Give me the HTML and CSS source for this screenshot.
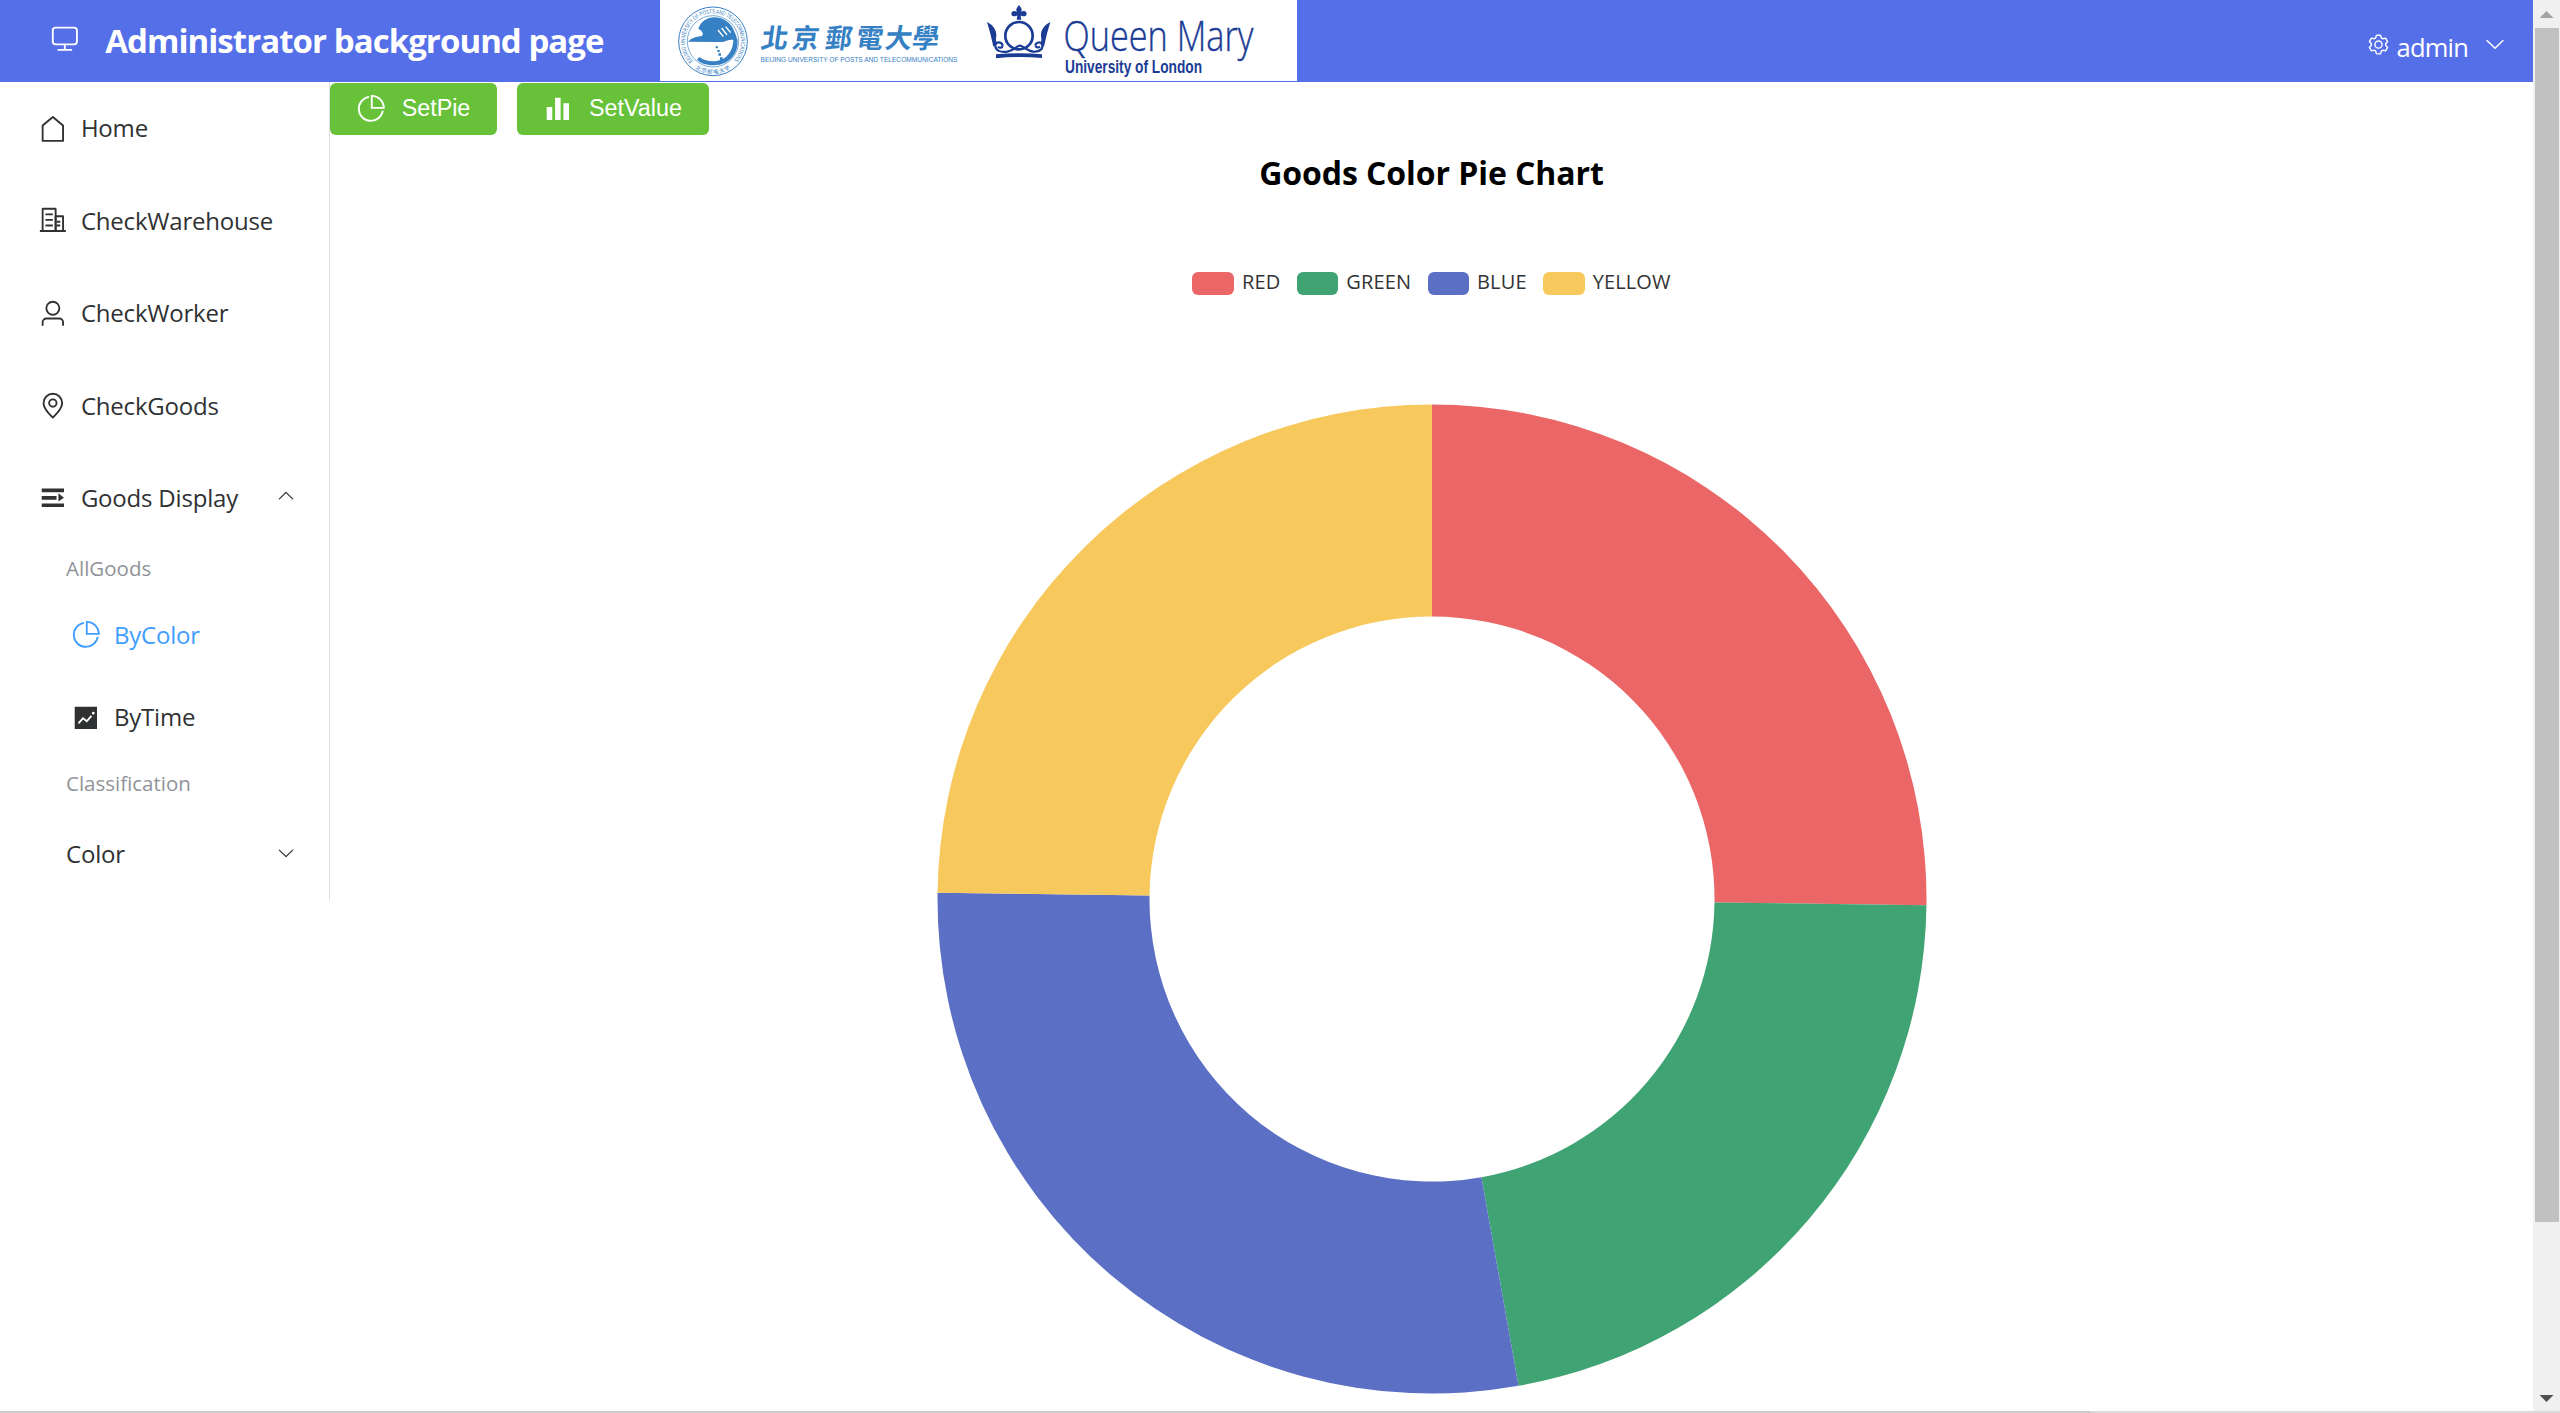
FILE: index.html
```html
<!DOCTYPE html>
<html lang="en">
<head>
<meta charset="utf-8">
<title>Administrator background page</title>
<link rel="stylesheet" href="styles.css">
</head>
<body>
<svg class="sprite" aria-hidden="true">
  <symbol id="i-monitor" viewBox="0 0 1024 1024"><path d="M544 768v128h192a32 32 0 1 1 0 64H288a32 32 0 1 1 0-64h192V768H192A128 128 0 0 1 64 640V256a128 128 0 0 1 128-128h640a128 128 0 0 1 128 128v384a128 128 0 0 1-128 128H544zM192 192a64 64 0 0 0-64 64v384a64 64 0 0 0 64 64h640a64 64 0 0 0 64-64V256a64 64 0 0 0-64-64H192z"/></symbol>
  <symbol id="i-house" viewBox="0 0 1024 1024"><path d="M192 413.952V896h640V413.952L512 147.328 192 413.952zM139.52 374.4l352-293.312a32 32 0 0 1 40.96 0l352 293.312A32 32 0 0 1 896 398.976V928a32 32 0 0 1-32 32H160a32 32 0 0 1-32-32V399.04a32 32 0 0 1 11.52-24.64z"/></symbol>
  <symbol id="i-office" viewBox="0 0 1024 1024"><path d="M192 128v704h384V128H192zm-32-64h448a32 32 0 0 1 32 32v768a32 32 0 0 1-32 32H160a32 32 0 0 1-32-32V96a32 32 0 0 1 32-32z"/><path d="M256 256h256v64H256v-64zm0 192h256v64H256v-64zm0 192h256v64H256v-64zm384-128h128v64H640v-64zm0 128h128v64H640v-64zM64 832h896v64H64v-64z"/><path d="M640 384v448h192V384H640zm-32-64h256a32 32 0 0 1 32 32v512a32 32 0 0 1-32 32H608a32 32 0 0 1-32-32V352a32 32 0 0 1 32-32z"/></symbol>
  <symbol id="i-user" viewBox="0 0 1024 1024"><path d="M512 512a192 192 0 1 0 0-384 192 192 0 0 0 0 384zm0 64a256 256 0 1 1 0-512 256 256 0 0 1 0 512zm320 320v-96a96 96 0 0 0-96-96H288a96 96 0 0 0-96 96v96a32 32 0 1 1-64 0v-96a160 160 0 0 1 160-160h448a160 160 0 0 1 160 160v96a32 32 0 1 1-64 0z"/></symbol>
  <symbol id="i-location" viewBox="0 0 1024 1024"><path d="M800 416a288 288 0 1 0-576 0c0 118.144 94.528 272.128 288 456.576C705.472 688.128 800 534.144 800 416zM512 960C277.312 746.688 160 565.312 160 416a352 352 0 0 1 704 0c0 149.312-117.312 330.688-352 544z"/><path d="M512 512a96 96 0 1 0 0-192 96 96 0 0 0 0 192zm0 64a160 160 0 1 1 0-320 160 160 0 0 1 0 320z"/></symbol>
  <symbol id="i-expand" viewBox="0 0 1024 1024"><path d="M128 192h768v128H128V192zm0 256h512v128H128V448zm0 256h768v128H128V704zm576-352 192 160-192 128V352z"/></symbol>
  <symbol id="i-pie" viewBox="0 0 1024 1024"><path d="M448 68.48v64.832A384.128 384.128 0 0 0 512 896a384.128 384.128 0 0 0 378.688-320h64.768A448.128 448.128 0 0 1 64 512 448.128 448.128 0 0 1 448 68.48z"/><path d="M576 97.28V448h350.72A384.064 384.064 0 0 0 576 97.28zM512 64V33.152A448 448 0 0 1 990.848 512H512V64z"/></symbol>
  <symbol id="i-trend" viewBox="0 0 1024 1024"><path d="M128 896V128h768v768H128zm291.712-327.296 128 102.4 180.16-201.792-47.744-42.624-139.84 156.608-128-102.4-180.16 201.792 47.744 42.624 139.84-156.608zM816 352a48 48 0 1 0-96 0 48 48 0 0 0 96 0z"/></symbol>
  <symbol id="i-histogram" viewBox="0 0 1024 1024"><path d="M416 896V128h192v768H416zm-288 0V448h192v448H128zm576 0V320h192v576H704z"/></symbol>
  <symbol id="i-arrow" viewBox="0 0 1024 1024"><path d="M831.872 340.864 512 652.672 192.128 340.864a30.592 30.592 0 0 0-42.752 0 29.12 29.12 0 0 0 0 41.6L489.664 714.24a32 32 0 0 0 44.672 0l340.288-331.712a29.12 29.12 0 0 0 0-41.728 30.592 30.592 0 0 0-42.752 0z"/></symbol>
  <symbol id="i-setting" viewBox="0 0 1024 1024"><path d="M600.704 64a32 32 0 0 1 30.464 22.208l35.2 109.376c14.784 7.232 28.928 15.36 42.432 24.512l112.384-24.192a32 32 0 0 1 34.432 15.36L944.32 364.8a32 32 0 0 1-4.032 37.504l-77.12 85.12a357.12 357.12 0 0 1 0 49.024l77.12 85.248a32 32 0 0 1 4.032 37.504l-88.704 153.6a32 32 0 0 1-34.432 15.296L708.8 803.904c-13.44 9.088-27.648 17.28-42.368 24.512l-35.264 109.376A32 32 0 0 1 600.704 960H423.296a32 32 0 0 1-30.464-22.208L357.696 828.48a351.616 351.616 0 0 1-42.56-24.64l-112.32 24.256a32 32 0 0 1-34.432-15.36L79.68 659.2a32 32 0 0 1 4.032-37.504l77.12-85.248a357.12 357.12 0 0 1 0-48.896l-77.12-85.248A32 32 0 0 1 79.68 364.8l88.704-153.6a32 32 0 0 1 34.432-15.296l112.32 24.256c13.568-9.152 27.776-17.408 42.56-24.64l35.2-109.312A32 32 0 0 1 423.232 64H600.64zm-23.424 64H446.72l-36.352 113.088-24.512 11.968a294.113 294.113 0 0 0-34.816 20.096l-22.656 15.36-116.224-25.088-65.28 113.152 79.68 88.192-1.92 27.136a293.12 293.12 0 0 0 0 40.192l1.92 27.136-79.808 88.192 65.344 113.152 116.224-25.024 22.656 15.296a294.113 294.113 0 0 0 34.816 20.096l24.512 11.968L446.72 896h130.688l36.48-113.152 24.448-11.904a288.282 288.282 0 0 0 34.752-20.096l22.592-15.296 116.288 25.024 65.28-113.152-79.744-88.192 1.92-27.136a293.12 293.12 0 0 0 0-40.256l-1.92-27.136 79.808-88.128-65.344-113.152-116.288 24.96-22.592-15.232a287.616 287.616 0 0 0-34.752-20.096l-24.448-11.904L577.344 128zM512 320a192 192 0 1 1 0 384 192 192 0 0 1 0-384zm0 64a128 128 0 1 0 0 256 128 128 0 0 0 0-256z"/></symbol>
</svg>

<div class="page">
  <header class="header">
    <svg class="icon header-icon"><use href="#i-monitor"/></svg>
    <h1 class="header-title">Administrator background page</h1>
    <svg class="logo" viewBox="660 0 637 81" role="img" aria-label="University logos">
      <g class="bupt" transform="translate(650 0) scale(.33333)">
        <circle cx="189" cy="124" r="103" class="line" stroke-width="3"/>
        <circle cx="189" cy="124" r="77" class="line" stroke-width="2"/>
        <path id="ring-top" d="M129 183A84 84 0 1 1 249 183" fill="none"/>
        <path id="ring-bottom" d="M133 204A98 98 0 0 0 245 204" fill="none"/>
        <text class="ring"><textPath href="#ring-top" textLength="390" lengthAdjust="spacingAndGlyphs">BEIJING UNIVERSITY OF POSTS AND TELECOMMUNICATIONS</textPath></text>
        <text class="ring-cn"><textPath href="#ring-bottom" textLength="112" startOffset="3">北京邮电大学</textPath></text>
        <path d="M114 125C124 114 138 110 156 108C162 100 156 92 145 86C152 64 172 52 192 52C222 52 244 70 252 92C258 104 262 116 262 124C250 118 240 118 230 122C222 126 214 126 200 126Z"/>
        <path d="M204 90L220 110M215 84L231 105M227 80L242 98" stroke="#fff" stroke-width="4" fill="none"/>
        <path d="M262 118C268 158 238 196 192 196C172 196 152 190 141 179L148 171C160 180 174 184 190 184C226 184 250 156 250 118Z"/>
        <path d="M197 139h7v6h-7zM202 150h7v6h-7zM205 160h8v7h-8zM210 172h8v12h-8z"/>
      </g>
      <g class="bupt">
        <text class="brush" transform="translate(0 48) skewX(-8)" y="0" x="760 791 824 855 884 911">北京郵電大學</text>
        <text class="bupt-en" x="760.5" y="62" textLength="197" lengthAdjust="spacingAndGlyphs">BEIJING UNIVERSITY OF POSTS AND TELECOMMUNICATIONS</text>
      </g>
      <g class="qm" transform="translate(970 0) scale(.33333)">
        <path d="M147 15C154 24 158 30 153 36C159 31 170 32 170 41C170 49 160 50 155 47L152 47L154 59H140L142 47L139 47C134 50 124 49 124 41C124 32 135 31 141 36C136 30 140 24 147 15Z"/>
        <ellipse cx="147" cy="107" rx="41" ry="41" class="line" stroke-width="8"/>
        <path d="M51 66C70 76 80 90 79 108C78 116 76 122 82 130L70 140C64 112 58 88 51 66ZM241 66C222 76 212 90 213 108C214 116 216 122 210 130L222 140C228 112 234 88 241 66Z"/>
        <path class="line" stroke-width="6.5" d="M98 136C94 124 78 124 76 136C75 152 92 158 112 155C140 150 140 134 152 137C166 142 176 157 196 155C212 153 220 146 216 133C212 124 198 126 196 136M84 140C90 146 97 143 98 136M210 140C204 145 198 142 196 136"/>
        <path d="M78 163C124 159 170 159 216 163V174C170 170 124 170 78 175Z"/>
      </g>
      <g class="qm">
        <text class="qm-name" x="1063.5" y="50.7" textLength="190" lengthAdjust="spacingAndGlyphs">Queen Mary</text>
        <text class="qm-sub" x="1065" y="73" textLength="137" lengthAdjust="spacingAndGlyphs">University of London</text>
      </g>
    </svg>
    <div class="account">
      <svg class="icon gear"><use href="#i-setting"/></svg>
      <span class="account-name">admin</span>
      <svg class="icon account-arrow"><use href="#i-arrow"/></svg>
    </div>
  </header>

  <div class="body">
    <nav class="menu">
      <a class="item"><svg class="icon"><use href="#i-house"/></svg><span>Home</span></a>
      <a class="item"><svg class="icon"><use href="#i-office"/></svg><span>CheckWarehouse</span></a>
      <a class="item"><svg class="icon"><use href="#i-user"/></svg><span>CheckWorker</span></a>
      <a class="item"><svg class="icon"><use href="#i-location"/></svg><span>CheckGoods</span></a>
      <a class="item"><svg class="icon"><use href="#i-expand"/></svg><span>Goods Display</span><svg class="caret open"><use href="#i-arrow"/></svg></a>
      <div class="group">AllGoods</div>
      <a class="item sub active"><svg class="icon"><use href="#i-pie"/></svg><span>ByColor</span></a>
      <a class="item sub"><svg class="icon"><use href="#i-trend"/></svg><span>ByTime</span></a>
      <div class="group">Classification</div>
      <a class="item nested"><span>Color</span><svg class="caret"><use href="#i-arrow"/></svg></a>
    </nav>

    <main class="content">
      <div class="toolbar">
        <button class="btn"><svg class="icon"><use href="#i-pie"/></svg><span>SetPie</span></button>
        <button class="btn"><svg class="icon"><use href="#i-histogram"/></svg><span>SetValue</span></button>
      </div>
      <h2 class="chart-title">Goods Color Pie Chart</h2>
      <ul class="legend">
        <li class="key red">RED</li>
        <li class="key green">GREEN</li>
        <li class="key blue">BLUE</li>
        <li class="key yellow">YELLOW</li>
      </ul>
      <svg class="donut" viewBox="-495 -495 990 990" role="img" aria-label="Goods by color">
        <path class="s-red" d="M0-494.5A494.5 494.5 0 0 1 494.46 6.21L282.48 3.55A282.5 282.5 0 0 0 0-282.5Z"/>
        <path class="s-green" d="M494.46 6.21A494.5 494.5 0 0 1 86.55 486.87L49.44 278.14A282.5 282.5 0 0 0 282.48 3.55Z"/>
        <path class="s-blue" d="M86.55 486.87A494.5 494.5 0 0 1-494.46-6.21L-282.48-3.55A282.5 282.5 0 0 0 49.44 278.14Z"/>
        <path class="s-yellow" d="M-494.46-6.21A494.5 494.5 0 0 1 0-494.5V-282.5A282.5 282.5 0 0 0-282.48-3.55Z"/>
      </svg>
    </main>
  </div>
</div>
<div class="scrollbar"><i class="up"></i><i class="thumb"></i><i class="down"></i></div>
<div class="edge"><i class="edge-fill"></i></div>
</body>
</html>
```
FILE: styles.css
```css
* { box-sizing: border-box; }

body {
  margin: 0;
  width: 2560px;
  height: 1413px;
  overflow: hidden;
  display: grid;
  grid-template: 1411px 2px / 2533px 27px;
  background: #fff;
  color: #303133;
  font-family: "Open Sans", "Noto Sans", sans-serif;
}

.sprite { position: absolute; width: 0; height: 0; }
.icon { width: 29.7px; height: 29.7px; fill: currentColor; flex: none; }

.page { overflow: hidden; }

/* Header */
.header {
  display: flex;
  height: 82px;
  background: #556fe9;
  color: #fff;
}
.header-icon { margin: 23px 0 0 49.5px; }
.header-title {
  margin: 0 0 0 26px;
  width: 554.8px;
  font-size: 33px;
  line-height: 82px;
  letter-spacing: -.95px;
  white-space: nowrap;
}
.logo { width: 637px; height: 81px; background: #fff; flex: none; }
.account {
  display: flex;
  align-items: center;
  margin-left: auto;
  padding: 11px 26px 0 0;
}
.gear { width: 23px; height: 23px; margin: -4px 7px 0 0; }
.account-name { font-size: 25.5px; line-height: 36px; letter-spacing: -.8px; }
.account-arrow { width: 24px; height: 24px; margin: -5px 0 0 15px; }

/* Logos */
.bupt { fill: #3680c4; }
.qm { fill: #1b3c95; }
.line { fill: none; }
.bupt .line { stroke: #3680c4; }
.qm .line { stroke: #1b3c95; }
.ring { font: 400 18px "Liberation Sans", sans-serif; }
.ring-cn { font: 400 17px "Noto Sans CJK SC", sans-serif; }
.brush { font: 700 27px "Noto Sans CJK TC", sans-serif; }
.bupt-en { font: 400 6.8px "Liberation Sans", sans-serif; }
.qm-name { font: 300 42px "Open Sans", sans-serif; stroke: #1b3c95; stroke-width: .4px; }
.qm-sub { font: 700 17.5px "Liberation Sans", sans-serif; }

/* Body */
.body { display: flex; align-items: flex-start; }
.menu {
  width: 330px;
  height: 818px;
  padding-top: .5px;
  border-right: 1px solid #dcdfe6;
  flex: none;
  font-size: 24px;
}
.item {
  display: flex;
  align-items: center;
  height: 92.4px;
  padding: 0 32px 0 38px;
  gap: 13.2px;
  letter-spacing: -.2px;
  white-space: nowrap;
}
.item span { padding-bottom: 1.5px; }
.sub { height: 82.5px; padding-left: 71px; }
.nested { padding-left: 66px; }
.active { color: #409eff; }
.group {
  height: 49.5px;
  padding-left: 66px;
  font-size: 20.5px;
  line-height: 49.5px;
  color: #909399;
}
.caret { width: 20px; height: 20px; margin: -4px 1px 0 auto; fill: currentColor; }
.open { transform: rotate(180deg); }

/* Content */
.content {
  flex: 1;
  display: flex;
  flex-direction: column;
  align-items: center;
}
.toolbar { display: flex; align-self: stretch; gap: 20px; padding-top: 1px; }
.btn {
  display: flex;
  align-items: center;
  gap: 16px;
  height: 52px;
  padding: 0 27px 0 26px;
  border: 0;
  border-radius: 6px;
  background: #67c23a;
  color: #fff;
  font: 23.3px "Liberation Sans", Arial, sans-serif;
}
.btn span { padding-bottom: 2px; }
.chart-title {
  margin: 16px 0 0;
  font-size: 32px;
  line-height: 44px;
  letter-spacing: -.08px;
  color: #000;
}
.legend {
  display: flex;
  gap: 16.5px;
  margin: 72.5px 0 0;
  padding: 0;
  list-style: none;
  font-size: 20px;
  line-height: 28px;
  letter-spacing: .12px;
  color: #333;
}
.key { display: flex; align-items: center; gap: 8px; }
.key::before {
  content: "";
  width: 41.5px;
  height: 23px;
  margin-top: 3px;
  border-radius: 6px;
  background: currentColor;
}
.red::before, .s-red { background: #eb6767; fill: #eb6767; }
.green::before, .s-green { background: #40a374; fill: #40a374; }
.blue::before, .s-blue { background: #5b6fc5; fill: #5b6fc5; }
.yellow::before, .s-yellow { background: #f7c85c; fill: #f7c85c; }
.donut { width: 990px; height: 990px; margin-top: 108.5px; }

/* Window chrome */
.scrollbar {
  display: flex;
  flex-direction: column;
  align-items: center;
  background: #f0f0f0;
}
.up, .down { width: 14px; height: 7px; }
.up { margin-top: 11px; background: #a3a3a3; clip-path: polygon(50% 0, 100% 100%, 0 100%); }
.thumb { width: 24px; height: 1194px; margin: 10px 0 0 1px; background: #c1c1c1; }
.down { margin-top: 173px; background: #505050; clip-path: polygon(0 0, 100% 0, 50% 100%); }
.edge { grid-column: 1 / 3; background: #dadada; display: flex; }
.edge-fill { width: 2090px; background: #cbcbce; }
```
